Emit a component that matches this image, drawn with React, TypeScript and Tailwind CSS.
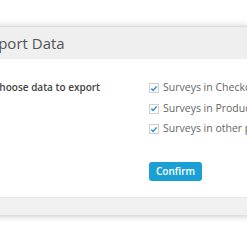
import React from "react";

const items = ["Surveys in Checkout", "Surveys in Product pages", "Surveys in other pages"];

const Check = () => (
  <span className="flex h-[10px] w-[10px] shrink-0 items-center justify-center border border-[#cfcfcf] bg-white">
    <svg viewBox="0 0 12 12" className="h-[9px] w-[9px]">
      <path d="M2 6.2 L4.8 9 L10 2.8" fill="none" stroke="#2f8fd0" strokeWidth="2.2" />
    </svg>
  </span>
);

const App = () => {
  return (
    <div className="h-[247px] w-[247px] overflow-hidden bg-white" style={{ fontFamily: '"Open Sans", sans-serif' }}>
      <div className="ml-[-30px] mt-[26px] w-[320px] border-t border-[#dcdcdc] bg-white shadow-[0_2px_6px_rgba(0,0,0,0.18),0_-3px_6px_rgba(0,0,0,0.06)]">
        <div className="flex h-[32px] items-center bg-[#efefef] pl-[12px] text-[15px] text-[#555]">Export Data</div>
        <div className="flex h-[138px] pt-[19px]">
          <div className="w-[179px] shrink-0 pl-[23px] text-[10px] font-semibold leading-[18px] text-[#444]">Choose data to export</div>
          <div className="flex flex-col">
            {items.map((t) => (
              <label key={t} className="flex h-[20.5px] items-center gap-[4px] text-[10.5px] text-[#666]">
                <Check />
                <span className="whitespace-nowrap">{t}</span>
              </label>
            ))}
            <button className="mt-[22px] h-[19px] w-[53px] rounded-[3px] bg-[#1ba0d6] text-[10px] font-semibold text-white">Confirm</button>
          </div>
        </div>
        <div className="h-[18px] border-t border-[#e6e6e6] bg-[#f1f1f1]" />
      </div>
    </div>
  );
};

export default App;
